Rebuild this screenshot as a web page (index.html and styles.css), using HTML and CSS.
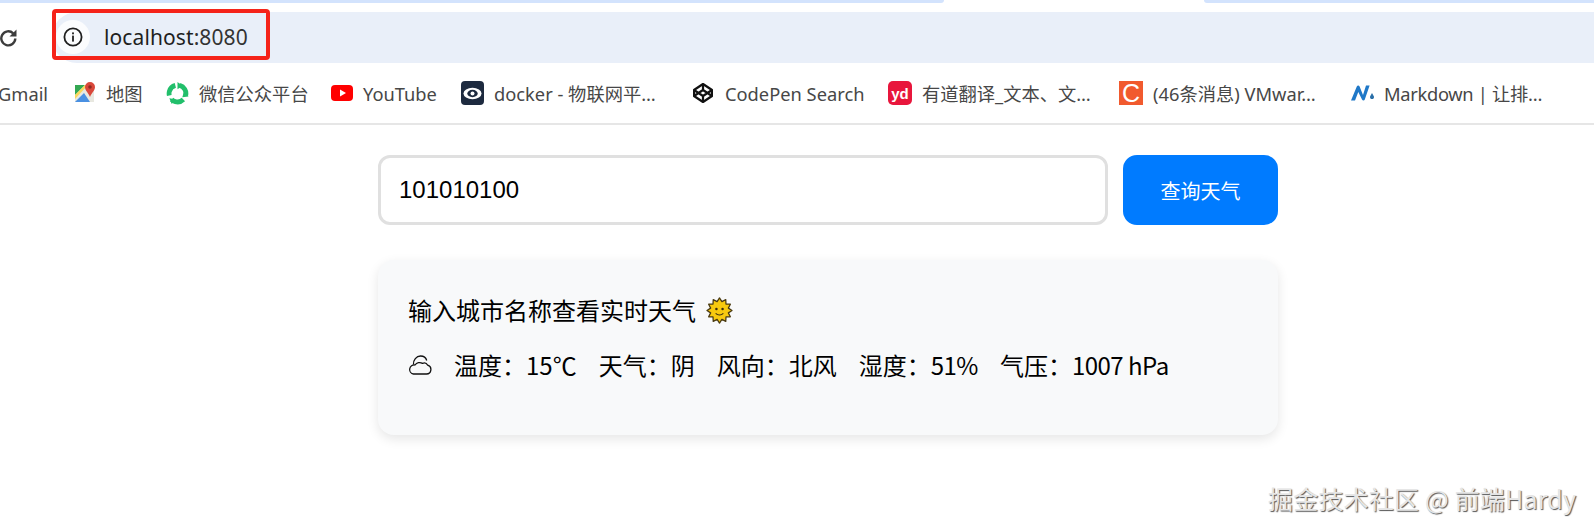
FILE: index.html
```html
<!DOCTYPE html>
<html lang="zh-CN">
<head>
<meta charset="utf-8">
<title>天气查询</title>
<link rel="stylesheet" href="styles.css">
</head>
<body>
<header class="chrome">
  <div class="tabstrip">
    <div class="tab tab-left"></div>
    <div class="tab-active"></div>
    <div class="tab tab-right"></div>
  </div>
  <div class="toolbar">
    <svg class="reload" viewBox="0 0 20 20" width="20" height="20"><path d="M16.300 10.500a7 7 0 1 1-2.100-5.200" fill="none" stroke="#3c3c3c" stroke-width="2.400"/><path d="M17.500 1.500v7h-7z" fill="#3c3c3c"/></svg>
    <div class="omnibox">
      <span class="info-chip">
        <svg viewBox="0 0 20 20" width="20" height="20"><circle cx="10" cy="10" r="8.600" fill="none" stroke="#1f1f1f" stroke-width="1.800"/><rect x="9.100" y="8.600" width="1.800" height="6" fill="#1f1f1f"/><rect x="9.100" y="5.400" width="1.800" height="1.900" fill="#1f1f1f"/></svg>
      </span>
      <span class="host">localhost<span class="port">:8080</span></span>
    </div>
  </div>
  <nav class="bookmarks">
    <a class="bm bm-gmail"><span class="bm-text">Gmail</span></a>
    <a class="bm">
      <svg class="bm-icon" viewBox="0 0 22 22"><path d="M1 3h14l5 6v11H1z" fill="#e8e8e0"/><path d="M1 3h10L1 13z" fill="#34a853"/><path d="M1 20l9-9 6 9z" fill="#4a90e2"/><path d="M1 13l10-10h3L1 17z" fill="#fbd75b"/><path d="M16 0a5 5 0 0 1 5 5c0 3.500-3.500 6-5 10-1.500-4-5-6.500-5-10a5 5 0 0 1 5-5z" fill="#d9483b"/><circle cx="16" cy="5" r="1.800" fill="#8e2a21"/></svg>
      <span class="bm-text">地图</span>
    </a>
    <a class="bm">
      <svg class="bm-icon bm-wechat" viewBox="0 0 24 24"><circle cx="12" cy="12" r="8.800" fill="none" stroke="#22bf6b" stroke-width="5" stroke-dasharray="13.500 4.930" transform="rotate(-75 12 12)"/><path d="M12 0l5.500 4L12 7.500zM23.500 15l-6.500 1 2-6.500zM3.500 17l6 1-3.500 5z" fill="#22bf6b"/></svg>
      <span class="bm-text">微信公众平台</span>
    </a>
    <a class="bm">
      <svg class="bm-icon" viewBox="0 0 22 22"><rect x="0" y="3" width="22" height="16" rx="4" fill="#f00"/><path d="M9 7.500l6 3.500-6 3.500z" fill="#fff"/></svg>
      <span class="bm-text">YouTube</span>
    </a>
    <a class="bm">
      <svg class="bm-icon bm-tall" viewBox="0 0 23 24"><rect width="23" height="24" rx="4" fill="#1d2a3f"/><ellipse cx="11.500" cy="12.500" rx="9" ry="5.800" fill="#fff"/><ellipse cx="11.500" cy="12.500" rx="5.200" ry="3.700" fill="#1d2a3f"/><circle cx="11.500" cy="12.500" r="2" fill="#fff"/></svg>
      <span class="bm-text">docker - 物联网平…</span>
    </a>
    <a class="bm">
      <svg class="bm-icon bm-pen" viewBox="0 0 20 20"><g fill="none" stroke="#111" stroke-width="2.200" stroke-linejoin="round"><path d="M10 1l9 6v6l-9 6-9-6V7z"/><path d="M10 1v6M10 13v6M1 7l9 6 9-6M1 13l9-6 9 6"/></g></svg>
      <span class="bm-text">CodePen Search</span>
    </a>
    <a class="bm">
      <span class="bm-badge badge-yd">yd</span>
      <span class="bm-text">有道翻译_文本、文…</span>
    </a>
    <a class="bm">
      <span class="bm-badge badge-c">C</span>
      <span class="bm-text">(46条消息) VMwar…</span>
    </a>
    <a class="bm">
      <svg class="bm-icon bm-wide" viewBox="0 0 24 20"><path d="M1 17.500L6.800 3.500c.6-1.300 2.200-1.300 2.800 0L13 12l3-9.500h3.600l-4.800 14c-.5 1.300-2.200 1.300-2.800 0L8.300 9 5 17.500z" fill="#1f78c8"/><path d="M22 10l1.800 3.200a2 2 0 1 1-3.600 0z" fill="#2a6fa8"/></svg>
      <span class="bm-text bm-tight">Markdown | 让排…</span>
    </a>
  </nav>
  <div class="highlight"></div>
</header>
<main class="page">
  <form class="search">
    <input class="search-input" type="text" value="101010100">
    <button class="search-btn" type="button">查询天气</button>
  </form>
  <section class="card">
    <p class="card-title">输入城市名称查看实时天气
      <svg class="sun" viewBox="-1 -1 28 28" width="27" height="27"><polygon points="13,0 15.460,3.820 19.500,1.740 19.720,6.280 24.260,6.500 22.180,10.540 26,13 22.180,15.460 24.260,19.500 19.720,19.720 19.500,24.260 15.460,22.180 13,26 10.540,22.180 6.500,24.260 6.280,19.720 1.740,19.500 3.820,15.460 0,13 3.820,10.540 1.740,6.500 6.280,6.280 6.500,1.740 10.540,3.820" fill="#f7c90f" stroke="#4a3a10" stroke-width="1.300" stroke-linejoin="round"/><circle cx="9.800" cy="11.500" r="1.300" fill="#3a2d10"/><circle cx="16.200" cy="11.500" r="1.300" fill="#3a2d10"/><path d="M9 16c2.300 2 5.700 2 8 0" fill="none" stroke="#3a2d10" stroke-width="1.300"/></svg>
    </p>
    <div class="weather">
      <svg class="cloud" viewBox="0 0 24 20" width="24" height="20"><g fill="none" stroke="#111" stroke-width="1.300" stroke-linejoin="round"><path d="M5.500 19h13a4.500 4.500 0 0 0 1.200-8.800 4 4 0 0 0-5.200-1.800 5.500 5.500 0 0 0-7.500 1.600A4.500 4.500 0 0 0 5.500 19z"/><path d="M5.500 9.500C5 5 8.500 1 12.500 1c3 0 5.500 1.800 6.200 4.500"/></g></svg>
      <span>温度：15℃</span>
      <span>天气：阴</span>
      <span>风向：北风</span>
      <span>湿度：<span class="num">51%</span></span>
      <span>气压：<span class="num">1007 hPa</span></span>
    </div>
  </section>
</main>
<div class="watermark">掘金技术社区 @ 前端Hardy</div>
</body>
</html>
```
FILE: styles.css
```css
* { box-sizing: border-box; }
html, body { margin: 0; padding: 0; }
body {
  width: 1594px;
  height: 532px;
  overflow: hidden;
  position: relative;
  background: #fff;
  font-family: "Noto Sans", "Noto Sans CJK SC", sans-serif;
  color: #000;
}
.chrome { position: relative; }
.tabstrip { display: flex; height: 12px; background: #fff; }
.tab { height: 3px; background: #d3e3fd; }
.tab-left { width: 944px; border-bottom-right-radius: 8px; }
.tab-active { width: 260px; }
.tab-right { flex: 1; border-bottom-left-radius: 8px; }
.toolbar { display: flex; align-items: center; height: 51px; }
.reload { flex: none; margin-left: -1px; margin-right: 33px; margin-top: 1px; }
.omnibox {
  flex: 1;
  display: flex;
  align-items: center;
  height: 51px;
  background: #e9eff9;
  padding-left: 4px;
  padding-bottom: 1px;
  border-radius: 25px 0 0 25px;
}
.info-chip {
  display: flex;
  align-items: center;
  justify-content: center;
  width: 34px;
  height: 34px;
  border-radius: 50%;
  background: #fbfcfe;
  margin-right: 14px;
}
.host { font-size: 21px; color: #1f1f1f; letter-spacing: .1px; }
.port { color: #333; }
.highlight {
  position: absolute;
  left: 52px;
  top: 9px;
  width: 218px;
  height: 51px;
  border: 4px solid #f5231a;
  border-radius: 4px;
}
.bookmarks {
  display: grid;
  grid-template-columns: 74px 92px 165px 130px 232px 195px 231px 231px 1fr;
  align-items: center;
  height: 62px;
  border-bottom: 2px solid #e6e6e6;
}
.bm { display: flex; align-items: center; gap: 10px; min-width: 0; white-space: nowrap; }
.bm-gmail { margin-left: -2px; }
.bm-icon { flex: none; width: 22px; height: 22px; }
.bm-wechat { width: 23px; height: 23px; }
.bm-tall { width: 23px; height: 24px; }
.bm-pen { width: 20px; height: 20px; margin-right: 2px; }
.bm-wide { width: 24px; height: 20px; }
.bm-text { font-size: 18.300px; color: #474747; }
.bm-tight { letter-spacing: -.3px; }
.bm-badge {
  flex: none;
  display: flex;
  align-items: center;
  justify-content: center;
  width: 24px;
  height: 24px;
  color: #fff;
  font-family: "Liberation Sans", sans-serif;
}
.badge-yd { background: #e8163c; border-radius: 5px; font-size: 15px; font-weight: 700; }
.badge-c { background: #f15a2e; font-size: 25px; }
.page { margin-left: 378px; width: 900px; padding-top: 30px; }
.search { display: flex; gap: 15px; margin: 0 0 35px; }
.search-input {
  width: 730px;
  height: 70px;
  border: 3px solid #e0e0e0;
  border-radius: 12px;
  padding: 0 18px;
  font-family: "Liberation Sans", sans-serif;
  font-size: 24px;
  color: #000;
  background: #fff;
  outline: none;
}
.search-btn {
  width: 155px;
  height: 70px;
  border: 0;
  border-radius: 14px;
  background: #007bff;
  color: #fff;
  font-family: "Noto Sans CJK SC", sans-serif;
  font-weight: 400;
  font-size: 20px;
  padding: 0;
}
.card {
  height: 175px;
  padding: 32px 30px 30px;
  background: #f8f9fa;
  border-radius: 16px;
  box-shadow: 0 4px 12px rgba(0, 0, 0, .1);
  font-family: "Noto Sans CJK SC", sans-serif;
  font-size: 24px;
  font-weight: 400;
}
.card-title {
  display: flex;
  align-items: center;
  gap: 10px;
  height: 36px;
  margin: 0;
  font-size: 24px;
  line-height: 36px;
}
.sun { flex: none; }
.weather {
  display: flex;
  align-items: center;
  gap: 22px;
  height: 36px;
  margin-top: 19px;
  line-height: 36px;
  white-space: nowrap;
}
.num { letter-spacing: -.5px; }
.cloud { flex: none; }
.watermark {
  position: absolute;
  left: 1268px;
  top: 482px;
  font-size: 25px;
  line-height: 32px;
  letter-spacing: .2px;
  white-space: nowrap;
  font-family: "Noto Sans CJK SC", sans-serif;
  color: #e6e6e6;
  text-shadow: 1px 1px 1px #555, -1px -1px 0 #fff;
}
```
